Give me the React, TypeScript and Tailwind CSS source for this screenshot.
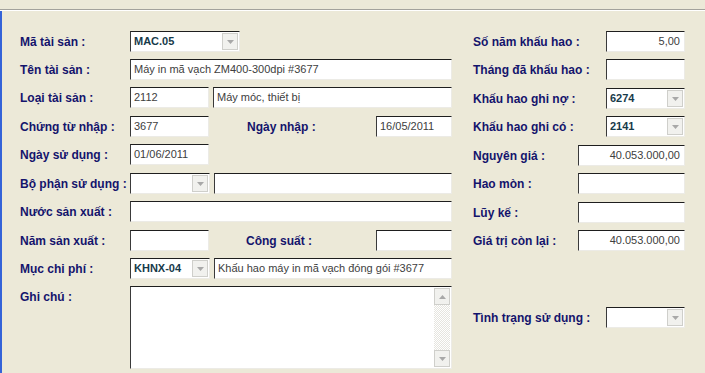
import React from "react";

const FONT = "font-['Liberation_Sans',Arial,sans-serif]";

function Input({
  w,
  text,
  right,
  className = "",
}: {
  w?: string;
  text?: string;
  right?: boolean;
  className?: string;
}) {
  return (
    <div
      className={`h-[21px] ${w ?? ""} bg-white border-t border-l border-t-[#1e1e1e] border-l-[#3a3a3a] border-b border-r border-b-[#ecebe6] border-r-[#ecebe6] flex items-center pl-[3px] pr-[4px] text-[11px] text-[#404040] whitespace-nowrap overflow-hidden ${
        right ? "justify-end" : ""
      } ${className}`}
    >
      {text}
    </div>
  );
}

function Arrow({ up }: { up?: boolean }) {
  return (
    <svg width="7" height="4" viewBox="0 0 7 4">
      {up ? (
        <path d="M0 4 L3.5 0 L7 4 Z" fill="#a8a8a8" />
      ) : (
        <path d="M0 0 L7 0 L3.5 4 Z" fill="#a8a8a8" />
      )}
    </svg>
  );
}

function Btn({ up, className = "" }: { up?: boolean; className?: string }) {
  return (
    <div
      className={`w-[16px] h-[17px] bg-[#f1f1ee] border border-[#cfcfcb] flex items-center justify-center ${className}`}
    >
      <Arrow up={up} />
    </div>
  );
}

function Combo({ w, text }: { w: string; text?: string }) {
  return (
    <div
      className={`h-[21px] ${w} bg-white border-t border-l border-t-[#1e1e1e] border-l-[#3a3a3a] border-b border-r border-b-[#ecebe6] border-r-[#ecebe6] flex items-center pl-[3px] pr-[1px]`}
    >
      <span className="flex-1 text-[11px] font-bold text-[#173a4a] whitespace-nowrap overflow-hidden">
        {text}
      </span>
      <Btn />
    </div>
  );
}

function Label({ children, className = "" }: { children: React.ReactNode; className?: string }) {
  return (
    <div
      className={`h-[21px] flex items-center text-[12px] font-bold text-[#14146c] whitespace-nowrap ${className}`}
    >
      {children}
    </div>
  );
}

function Row({
  label,
  children,
  mt,
}: {
  label: string;
  children: React.ReactNode;
  mt: string;
}) {
  return (
    <div className={`flex items-start ${mt}`}>
      <Label className="w-[110px]">{label}</Label>
      <div className="w-[322px] flex items-center">{children}</div>
    </div>
  );
}

function RRow({
  label,
  children,
  mt,
}: {
  label: string;
  children: React.ReactNode;
  mt: string;
}) {
  return (
    <div className={`flex items-center justify-between ${mt}`}>
      <Label>{label}</Label>
      {children}
    </div>
  );
}

export default function App() {
  return (
    <div className={`w-[705px] h-[373px] bg-[#ece9d8] overflow-hidden ${FONT}`}>
      <div className="h-[9px]" />
      <div className="h-[1px] bg-[#a3a29c]" />
      <div className="h-[1px] bg-white" />
      <div className="h-[362px] border-l-2 border-l-[#3563d8] flex pt-[20px]">
        {/* Left column */}
        <div className="ml-[18px] flex flex-col">
          <Row label="Mã tài sản :" mt="">
            <Combo w="w-[110px]" text="MAC.05" />
          </Row>
          <Row label="Tên tài sản :" mt="mt-[7px]">
            <Input w="w-[322px]" text="Máy in mã vạch ZM400-300dpi #3677" />
          </Row>
          <Row label="Loại tài sản :" mt="mt-[7px]">
            <Input w="w-[79px]" text="2112" />
            <Input w="flex-1 ml-[4px]" text="Máy móc, thiết bị" />
          </Row>
          <Row label="Chứng từ nhập :" mt="mt-[8px]">
            <Input w="w-[79px]" text="3677" />
            <Label className="ml-[38px]">Ngày nhập :</Label>
            <Input w="w-[76px] ml-auto" text="16/05/2011" />
          </Row>
          <Row label="Ngày sử dụng :" mt="mt-[7px]">
            <Input w="w-[79px]" text="01/06/2011" />
          </Row>
          <Row label="Bộ phận sử dụng :" mt="mt-[8px]">
            <Combo w="w-[80px]" />
            <Input w="flex-1 ml-[4px]" />
          </Row>
          <Row label="Nước sản xuất :" mt="mt-[7px]">
            <Input w="w-[322px]" />
          </Row>
          <Row label="Năm sản xuất :" mt="mt-[8px]">
            <Input w="w-[79px]" />
            <Label className="ml-[37px]">Công suất :</Label>
            <Input w="w-[76px] ml-auto" />
          </Row>
          <Row label="Mục chi phí :" mt="mt-[7px]">
            <Combo w="w-[80px]" text="KHNX-04" />
            <Input w="flex-1 ml-[4px]" text="Khấu hao máy in mã vạch đóng gói #3677" />
          </Row>
          <div className="flex items-start mt-[7px]">
            <Label className="w-[110px]">Ghi chú :</Label>
            <div className="w-[322px] h-[83px] bg-white border-t border-l border-t-[#1e1e1e] border-l-[#3a3a3a] border-b border-r border-b-[#ecebe6] border-r-[#ecebe6] flex justify-end p-[1px]">
              <div className="w-[16px] h-full flex flex-col bg-[repeating-conic-gradient(#e6e5df_0_25%,#ffffff_0_50%)] bg-[length:2px_2px]">
                <Btn up />
                <div className="flex-1" />
                <Btn />
              </div>
            </div>
          </div>
        </div>

        {/* Right column */}
        <div className="ml-[21px] w-[212px] flex flex-col">
          <RRow label="Số năm khấu hao :" mt="">
            <Input w="w-[79px]" text="5,00" right />
          </RRow>
          <RRow label="Tháng đã khấu hao :" mt="mt-[7px]">
            <Input w="w-[79px]" />
          </RRow>
          <RRow label="Khấu hao ghi nợ :" mt="mt-[8px]">
            <Combo w="w-[79px]" text="6274" />
          </RRow>
          <RRow label="Khấu hao ghi có :" mt="mt-[7px]">
            <Combo w="w-[79px]" text="2141" />
          </RRow>
          <RRow label="Nguyên giá :" mt="mt-[8px]">
            <Input w="w-[107px]" text="40.053.000,00" right />
          </RRow>
          <RRow label="Hao mòn :" mt="mt-[7px]">
            <Input w="w-[107px]" />
          </RRow>
          <RRow label="Lũy kế :" mt="mt-[8px]">
            <Input w="w-[107px]" />
          </RRow>
          <RRow label="Giá trị còn lại :" mt="mt-[7px]">
            <Input w="w-[107px]" text="40.053.000,00" right />
          </RRow>
          <RRow label="Tình trạng sử dụng :" mt="mt-[56px]">
            <Combo w="w-[79px]" />
          </RRow>
        </div>
      </div>
    </div>
  );
}
